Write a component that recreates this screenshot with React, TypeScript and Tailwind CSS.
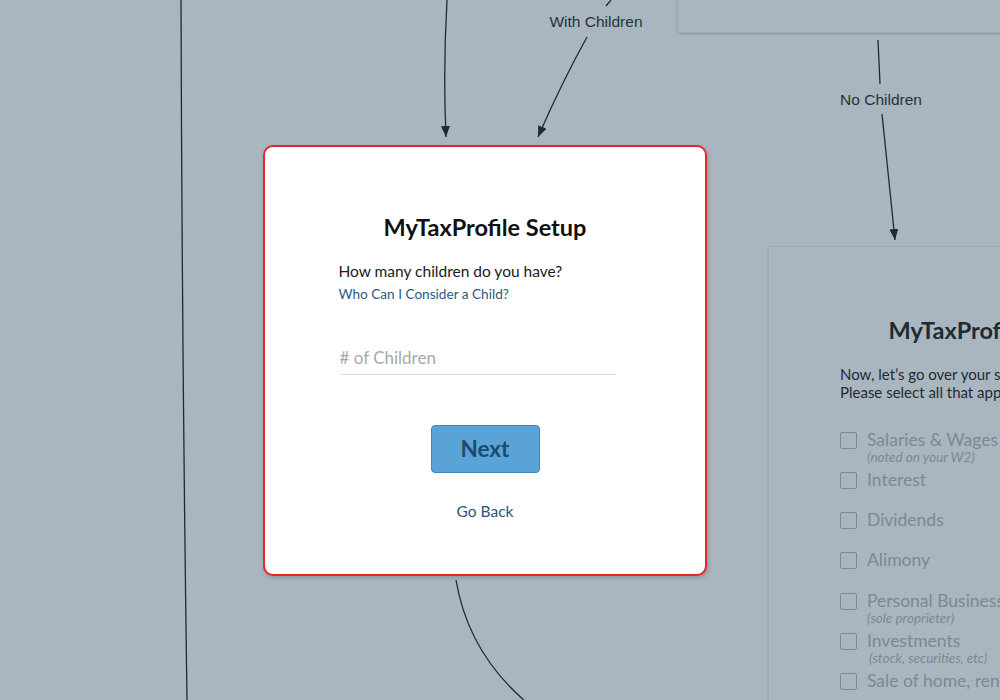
import React from "react";

const lato = { fontFamily: "Lato, 'Open Sans', sans-serif" };

function CheckRow({ label, sub, subPad = false }: { label: string; sub?: string; subPad?: boolean }) {
  return (
    <div className="flex h-[40px] items-start gap-[10px]">
      <div className="mt-[2px] h-[17px] w-[17px] shrink-0 rounded-[2px] border-[1.5px] border-[#7d8a93]" />
      <div className="flex flex-col whitespace-nowrap">
        <span className="text-[17.5px] leading-[20px] text-[#7c8991]">{label}</span>
        {sub && (
          <span className={`text-[13.5px] italic leading-[14px] text-[#7c8991] ${subPad ? "pl-[2px]" : ""}`}>{sub}</span>
        )}
      </div>
    </div>
  );
}

export default function App() {
  return (
    <div className="relative h-[700px] w-[1000px] overflow-hidden bg-[#a9b6bf]" style={lato}>
      {/* top right faded card */}
      <div className="absolute left-[677px] top-[-10px] h-[43px] w-[400px] border border-[#9eabb4] bg-[#a9b6bf] shadow-[0_1px_2px_rgba(0,0,0,0.18)]" />

      {/* right faded card */}
      <div className="absolute left-[768px] top-[246px] h-[500px] w-[444px] border border-[#9eabb4] bg-[#a9b6bf] shadow-[0_1px_2px_rgba(0,0,0,0.12)]">
        <div className="flex flex-col pl-[71px] pt-[69px]">
          <div className="pr-[71px] text-center text-[23.5px] font-bold leading-[28px] text-[#1f2a32]">MyTaxProfile Setup</div>
          <div className="mt-[21px] whitespace-nowrap text-[15px] leading-[18px] text-[#1f2a32]">
            <div>Now, let’s go over your sources of income.</div>
            <div>Please select all that apply.</div>
          </div>
          <div className="mt-[29px] flex flex-col">
            <CheckRow label="Salaries & Wages" sub="(noted on your W2)" />
            <CheckRow label="Interest" />
            <CheckRow label="Dividends" />
            <CheckRow label="Alimony" />
            <div className="h-[1px]" />
            <CheckRow label="Personal Business" sub="(sole proprieter)" />
            <CheckRow label="Investments" sub="(stock, securities, etc)" subPad />
            <CheckRow label="Sale of home, rental property" />
          </div>
        </div>
      </div>

      {/* edges */}
      <svg className="absolute left-0 top-0" width="1000" height="700" viewBox="0 0 1000 700">
        <defs>
          <marker id="ah" markerUnits="userSpaceOnUse" markerWidth="11" markerHeight="9" refX="11" refY="4.5" orient="auto">
            <path d="M0,0 L11,4.5 L0,9 z" fill="#1e2a33" />
          </marker>
        </defs>
        <g fill="none" stroke="#1e2a33" strokeWidth="1.3">
          <path d="M181 0 Q182 350 187 700" />
          <path d="M447 0 Q443 70 446 137" markerEnd="url(#ah)" />
          <path d="M611 0 L606 6" />
          <path d="M587 37 Q562 82 538 137" markerEnd="url(#ah)" />
          <path d="M878 40 L880 84" />
          <path d="M882 114 L895 240" markerEnd="url(#ah)" />
          <path d="M456 580 Q468 652 526 702" />
        </g>
      </svg>

      {/* edge labels */}
      <div
        className="absolute left-[546px] top-[11px] w-[100px] text-center text-[15.5px] leading-[21px] text-[#26323b]"
        style={{ fontFamily: "'Liberation Sans', Arial, sans-serif" }}
      >
        With Children
      </div>
      <div
        className="absolute left-[831px] top-[89px] w-[100px] text-center text-[15.5px] leading-[21px] text-[#26323b]"
        style={{ fontFamily: "'Liberation Sans', Arial, sans-serif" }}
      >
        No Children
      </div>

      {/* main card */}
      <div className="absolute left-[263px] top-[145px] h-[431px] w-[444px] rounded-[10px] border-2 border-[#e8262c] bg-white shadow-[1px_2px_4px_rgba(0,0,0,0.18)]">
        <div className="flex flex-col items-center pt-[66px]">
          <div className="text-[23.5px] font-bold leading-[28px] text-[#111]">MyTaxProfile Setup</div>
          <div className="mt-[20px] flex w-[293px] flex-col">
            <div className="text-[15.5px] leading-[20px] text-[#1a1a1a]">How many children do you have?</div>
            <div className="mt-[4px] text-[13.6px] leading-[18px] text-[#2a5c80]">Who Can I Consider a Child?</div>
            <input
              className="mt-[38px] ml-[1px] h-[34px] w-[276px] border-b border-[#dddddd] bg-transparent text-[17px] text-[#333] outline-none placeholder:text-[#a8a8a8]"
              placeholder="# of Children"
              style={lato}
            />
          </div>
          <button
            className="mt-[50px] flex h-[48px] w-[109px] items-center justify-center rounded-[4px] border border-[#3f86c0] bg-[#5aa3d6] text-[22.5px] font-bold text-[#1c4b6e]"
            style={lato}
          >
            Next
          </button>
          <div className="mt-[28px] text-[15.5px] leading-[20px] text-[#2b5578]">Go Back</div>
        </div>
      </div>
    </div>
  );
}
